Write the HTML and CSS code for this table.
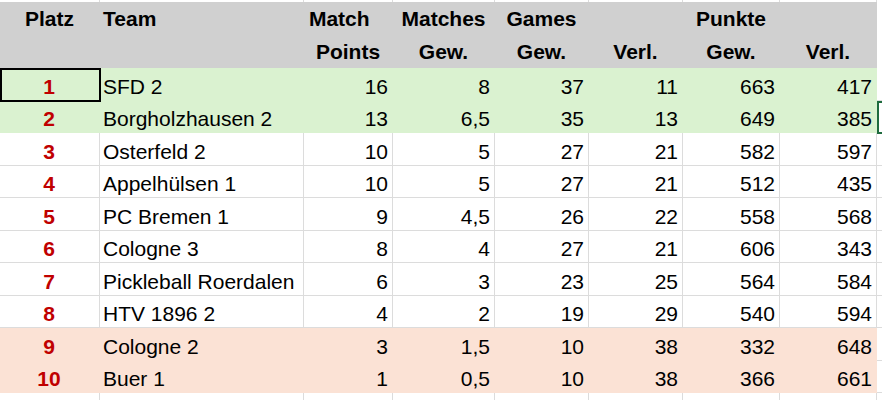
FILE: index.html
```html
<!DOCTYPE html>
<html lang="de">
<head>
<meta charset="utf-8">
<title>Tabelle</title>
<link rel="stylesheet" href="styles.css">
</head>
<body>
<div class="sheet">
  <div class="row strip">
    <div class="c"></div><div class="c"></div><div class="c"></div><div class="c"></div><div class="c"></div><div class="c"></div><div class="c"></div><div class="c"></div><div class="f"></div>
  </div>
  <div class="row head">
    <div class="c ctr">Platz</div><div class="c lft">Team</div><div class="c ctr">Match&nbsp;&nbsp;&nbsp;</div><div class="c ctr">Matches</div><div class="c ctr">Games</div><div class="c"></div><div class="c ctr">Punkte</div><div class="c"></div><div class="f"></div>
  </div>
  <div class="row head">
    <div class="c"></div><div class="c"></div><div class="c ctr">Points</div><div class="c ctr">Gew.</div><div class="c ctr">Gew.</div><div class="c ctr">Verl.</div><div class="c ctr">Gew.</div><div class="c ctr">Verl.</div><div class="f"></div>
  </div>
  <div class="row green">
    <div class="c pl">1</div><div class="c lft">SFD 2</div><div class="c num">16</div><div class="c num">8</div><div class="c num">37</div><div class="c num">11</div><div class="c num">663</div><div class="c num">417</div><div class="f"></div>
  </div>
  <div class="row green">
    <div class="c pl">2</div><div class="c lft">Borgholzhausen 2</div><div class="c num">13</div><div class="c num">6,5</div><div class="c num">35</div><div class="c num">13</div><div class="c num">649</div><div class="c num">385</div><div class="f"></div>
  </div>
  <div class="row">
    <div class="c pl">3</div><div class="c lft">Osterfeld 2</div><div class="c num">10</div><div class="c num">5</div><div class="c num">27</div><div class="c num">21</div><div class="c num">582</div><div class="c num">597</div><div class="f"></div>
  </div>
  <div class="row">
    <div class="c pl">4</div><div class="c lft">Appelhülsen 1</div><div class="c num">10</div><div class="c num">5</div><div class="c num">27</div><div class="c num">21</div><div class="c num">512</div><div class="c num">435</div><div class="f"></div>
  </div>
  <div class="row">
    <div class="c pl">5</div><div class="c lft">PC Bremen 1</div><div class="c num">9</div><div class="c num">4,5</div><div class="c num">26</div><div class="c num">22</div><div class="c num">558</div><div class="c num">568</div><div class="f"></div>
  </div>
  <div class="row">
    <div class="c pl">6</div><div class="c lft">Cologne 3</div><div class="c num">8</div><div class="c num">4</div><div class="c num">27</div><div class="c num">21</div><div class="c num">606</div><div class="c num">343</div><div class="f"></div>
  </div>
  <div class="row">
    <div class="c pl">7</div><div class="c lft">Pickleball Roerdalen</div><div class="c num">6</div><div class="c num">3</div><div class="c num">23</div><div class="c num">25</div><div class="c num">564</div><div class="c num">584</div><div class="f"></div>
  </div>
  <div class="row">
    <div class="c pl">8</div><div class="c lft">HTV 1896 2</div><div class="c num">4</div><div class="c num">2</div><div class="c num">19</div><div class="c num">29</div><div class="c num">540</div><div class="c num">594</div><div class="f"></div>
  </div>
  <div class="row pink">
    <div class="c pl">9</div><div class="c lft">Cologne 2</div><div class="c num">3</div><div class="c num">1,5</div><div class="c num">10</div><div class="c num">38</div><div class="c num">332</div><div class="c num">648</div><div class="f"></div>
  </div>
  <div class="row pink">
    <div class="c pl">10</div><div class="c lft">Buer 1</div><div class="c num">1</div><div class="c num">0,5</div><div class="c num">10</div><div class="c num">38</div><div class="c num">366</div><div class="c num">661</div><div class="f"></div>
  </div>
  <div class="row rest">
    <div class="c"></div><div class="c"></div><div class="c"></div><div class="c"></div><div class="c"></div><div class="c"></div><div class="c"></div><div class="c"></div><div class="f"></div>
  </div>
  <div class="sel"></div>
  <div class="sel2"></div>
</div>
</body>
</html>
```
FILE: styles.css
```css
html, body {
  margin: 0;
  padding: 0;
  background: #fff;
  overflow: hidden;
}
body {
  width: 882px;
  height: 400px;
  font-family: "Liberation Sans", Arial, sans-serif;
  font-size: 21px;
  color: #000;
}
.sheet {
  position: relative;
  width: 882px;
  height: 400px;
  overflow: hidden;
}
.row {
  display: grid;
  grid-template-columns: 100px 204px 89px 102px 94px 94px 97px 97px 5px;
  height: 32.5px;
}
.c {
  box-sizing: border-box;
  border-right: 1px solid #dcdcdc;
  border-bottom: 1px solid #dcdcdc;
  display: flex;
  align-items: flex-end;
  padding: 0 4px 1px 3px;
  white-space: nowrap;
  line-height: 24px;
  min-width: 0;
}
.f {
  box-sizing: border-box;
  border-bottom: 1px solid #dcdcdc;
}
.strip { height: 2px; }
.strip .c { border-bottom: none; }
.strip .f { border-bottom: none; }
.head { height: 33px; }
.head .c {
  background: #d0d0d0;
  border: none;
  font-weight: bold;
  padding-bottom: 4px;
}
.head .f { border-bottom: none; }
.ctr { justify-content: center; }
.lft { justify-content: flex-start; }
.num { justify-content: flex-end; }
.pl {
  justify-content: center;
  color: #c00000;
  font-weight: bold;
}
.green .c {
  background: #daf2d0;
  border-color: #daf2d0;
}
.pink .c {
  background: #fbe2d5;
  border-color: #fbe2d5;
}
.rest { height: 20px; }
.rest .c, .rest .f { border-bottom: none; }
.sel {
  position: absolute;
  left: 0;
  top: 68px;
  width: 101px;
  height: 34px;
  box-sizing: border-box;
  border: 2px solid #000;
}
.sel2 {
  position: absolute;
  left: 877px;
  top: 101px;
  width: 12px;
  height: 33px;
  box-sizing: border-box;
  border: 2px solid #1e6b3e;
}
```
